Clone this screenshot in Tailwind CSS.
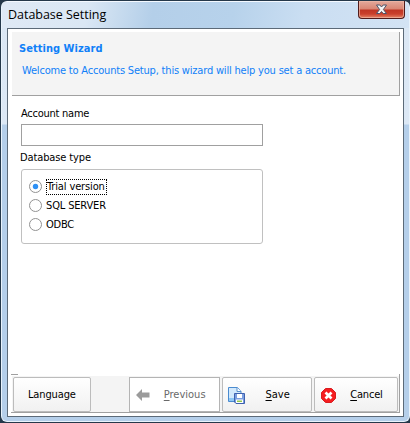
<!DOCTYPE html>
<html lang="en">
<head>
<meta charset="utf-8">
<title>Database Setting</title>
<script src="https://cdn.jsdelivr.net/npm/@tailwindcss/browser@4"></script>
</head>
<body class="w-[410px] h-[423px] overflow-hidden bg-[#173f5c] font-['DejaVu_Sans_Condensed','DejaVu_Sans',sans-serif] text-[11px] text-black">
<div class="w-[410px] h-[423px] bg-[#25384a] pl-px pt-px pb-px">
<main class="flex flex-col w-[409px] h-[421px] rounded-[6px] border border-[#e9f3fc] border-t-[#f4f9ff] bg-[linear-gradient(180deg,#dbe7f4_0px,#dce8f5_122px,#b5cfea_123px,#b5cfea_100%)] px-[5px] pb-[4px]">
  <header class="-mx-[5px] h-[26px] shrink-0 rounded-t-[5px] flex justify-between bg-[linear-gradient(100deg,#dfe9f5_0px,#dae7f4_85px,#b4cfe9_150px,#b7d2eb_230px,#cadef2_300px,#d3e3f4_100%)]">
    <h1 class="pl-[6px] pt-[3px] h-[20px] leading-[19px] text-[12.5px] font-['Open_Sans',sans-serif] whitespace-nowrap tracking-[-0.03px]">Database Setting</h1>
    <button aria-label="Close" class="-mt-px mr-[4px] w-[47px] h-[18px] rounded-b-[4px] border border-t-0 border-[#501b1b] bg-[linear-gradient(180deg,#e3a99c_0px,#d98573_8px,#bf3524_9px,#c9402c_13px,#e68466_17px)] shadow-[inset_0_0_0_1px_#efb8a8aa] flex justify-center items-center">
      <svg width="13" height="11" viewBox="0 0 13 11"><path d="M1.5 1h3.3l1.7 2 1.7-2h3.3L8.4 5.5l3.1 4H8.2L6.5 7.5 4.8 9.5H1.5l3.1-4z" fill="#f5f5f5" stroke="#4d5368" stroke-width="1"/></svg>
    </button>
  </header>
  <section class="flex-1 flex flex-col border border-[#5c6a78] bg-white w-[397px] pl-[3px] pr-[3px] pt-[3px] pb-[3px]">
    <div class="ml-px h-[64px] shrink-0 border-r border-b border-[#a0a0a0] bg-[#f4f4f4] pl-[7px] pt-[10px] text-[#1080f8] whitespace-nowrap">
      <h2 class="font-bold h-[14px] leading-[14px] tracking-[0.04px]">Setting Wizard</h2>
      <p class="ml-[3px] mt-[8px] h-[14px] leading-[14px] tracking-[-0.19px]">Welcome to Accounts Setup, this wizard will help you set a account.</p>
    </div>
    <form class="pl-[10px] pt-[11px] flex flex-col whitespace-nowrap">
      <label for="account" class="h-[14px] leading-[14px] tracking-[-0.25px]">Account name</label>
      <input id="account" class="mt-[3px] w-[242px] h-[22px] border border-[#a0a0a0] bg-white outline-none">
      <div class="mt-[5px] h-[14px] leading-[14px] -ml-px tracking-[-0.12px]">Database type</div>
      <div class="mt-[4px] w-[242px] h-[75px] border border-[#c0c0c0] rounded-[3px] pl-[7px] pt-[7px]">
        <div class="flex items-center h-[19px]"><svg class="w-[13px] h-[13px]" viewBox="0 0 13 13"><circle cx="6.5" cy="6.5" r="6" fill="#fff" stroke="#929292"/><circle cx="6.5" cy="6.5" r="2.7" fill="#2f91f5"/></svg><span class="ml-[4px] w-[61px] h-[16px] border border-dotted border-black leading-[13px] tracking-[-0.13px]">Trial version</span></div>
        <div class="flex items-center h-[19px]"><svg class="w-[13px] h-[13px]" viewBox="0 0 13 13"><circle cx="6.5" cy="6.5" r="6" fill="#fff" stroke="#929292"/></svg><span class="ml-[4px] leading-[14px] tracking-[-0.15px]">SQL SERVER</span></div>
        <div class="flex items-center h-[19px]"><svg class="w-[13px] h-[13px]" viewBox="0 0 13 13"><circle cx="6.5" cy="6.5" r="6" fill="#fff" stroke="#929292"/></svg><span class="ml-[4px] leading-[14px] tracking-[-0.25px]">ODBC</span></div>
      </div>
    </form>
    <footer class="mt-auto h-[39px] shrink-0 border-b border-r border-[#a0a0a0] flex flex-col">
      <div class="w-[7px] h-px shrink-0 bg-[#a0a0a0]"></div>
      <div class="mt-px ml-px h-[36px] bg-[#f4f4f4] flex pt-px pr-px whitespace-nowrap">
        <button class="ml-px w-[78px] h-[35px] border border-[#bcbcbc] rounded-[2px] bg-gradient-to-b from-white to-[#f1f1f1] pt-[2px] tracking-[-0.12px]">Language</button>
        <button class="ml-[38px] w-[91px] h-[35px] border border-[#b4b4b4] bg-white text-[#696969] flex items-center pl-[6px] pt-[2px]">
          <svg class="-mt-px" width="14" height="12" viewBox="0 0 14 12"><path d="M0 6l6-6v3.5h7.5v5H6V12z" fill="#9b9b9b"/></svg>
          <span class="ml-[14px]"><u class="underline-offset-2">P</u>revious</span>
        </button>
        <button class="ml-[2px] w-[91px] h-[35px] border border-[#bcbcbc] rounded-[2px] bg-gradient-to-b from-white to-[#f1f1f1] flex items-center pl-[5px] pt-[2px]">
          <svg class="-mt-px" width="17" height="17" viewBox="0 0 17 17"><path d="M.5.5h9l3.5 4v10H.5z" fill="#d3e9fc" stroke="#4a8bd0"/><path d="M1 11h6v3H1z" fill="#8fc8f5"/><path d="M9 .5v4h4" fill="#fff" stroke="#5a91cd"/><path d="M6.5 6.5h10v10H8l-1.5-1.5z" fill="#7a9ee0" stroke="#3e61ae"/><path d="M9 7h5v4H9zM8 12.500h7v3.500H8z" fill="#fff"/><path d="M9 13.500h5v1.500H9z" fill="#92c84c"/></svg>
          <span class="ml-[21px]"><u class="underline-offset-2">S</u>ave</span>
        </button>
        <button class="ml-[2px] w-[84px] h-[35px] border border-[#bcbcbc] rounded-[2px] bg-gradient-to-b from-white to-[#f1f1f1] flex items-center pl-[6px] pt-[2px]">
          <svg class="-mt-px" width="15" height="15" viewBox="0 0 15 15"><path d="M4.500.5h6l4 4v6l-4 4h-6l-4-4v-6z" fill="#f51d20" stroke="#d81d20"/><path d="M4.500 4.500l6 6m0-6l-6 6" stroke="#fff" stroke-width="2.700"/></svg>
          <span class="ml-[14px] tracking-[-0.2px]"><u class="underline-offset-2">C</u>ancel</span>
        </button>
      </div>
    </footer>
  </section>
</main>
</div>
</body>
</html>
